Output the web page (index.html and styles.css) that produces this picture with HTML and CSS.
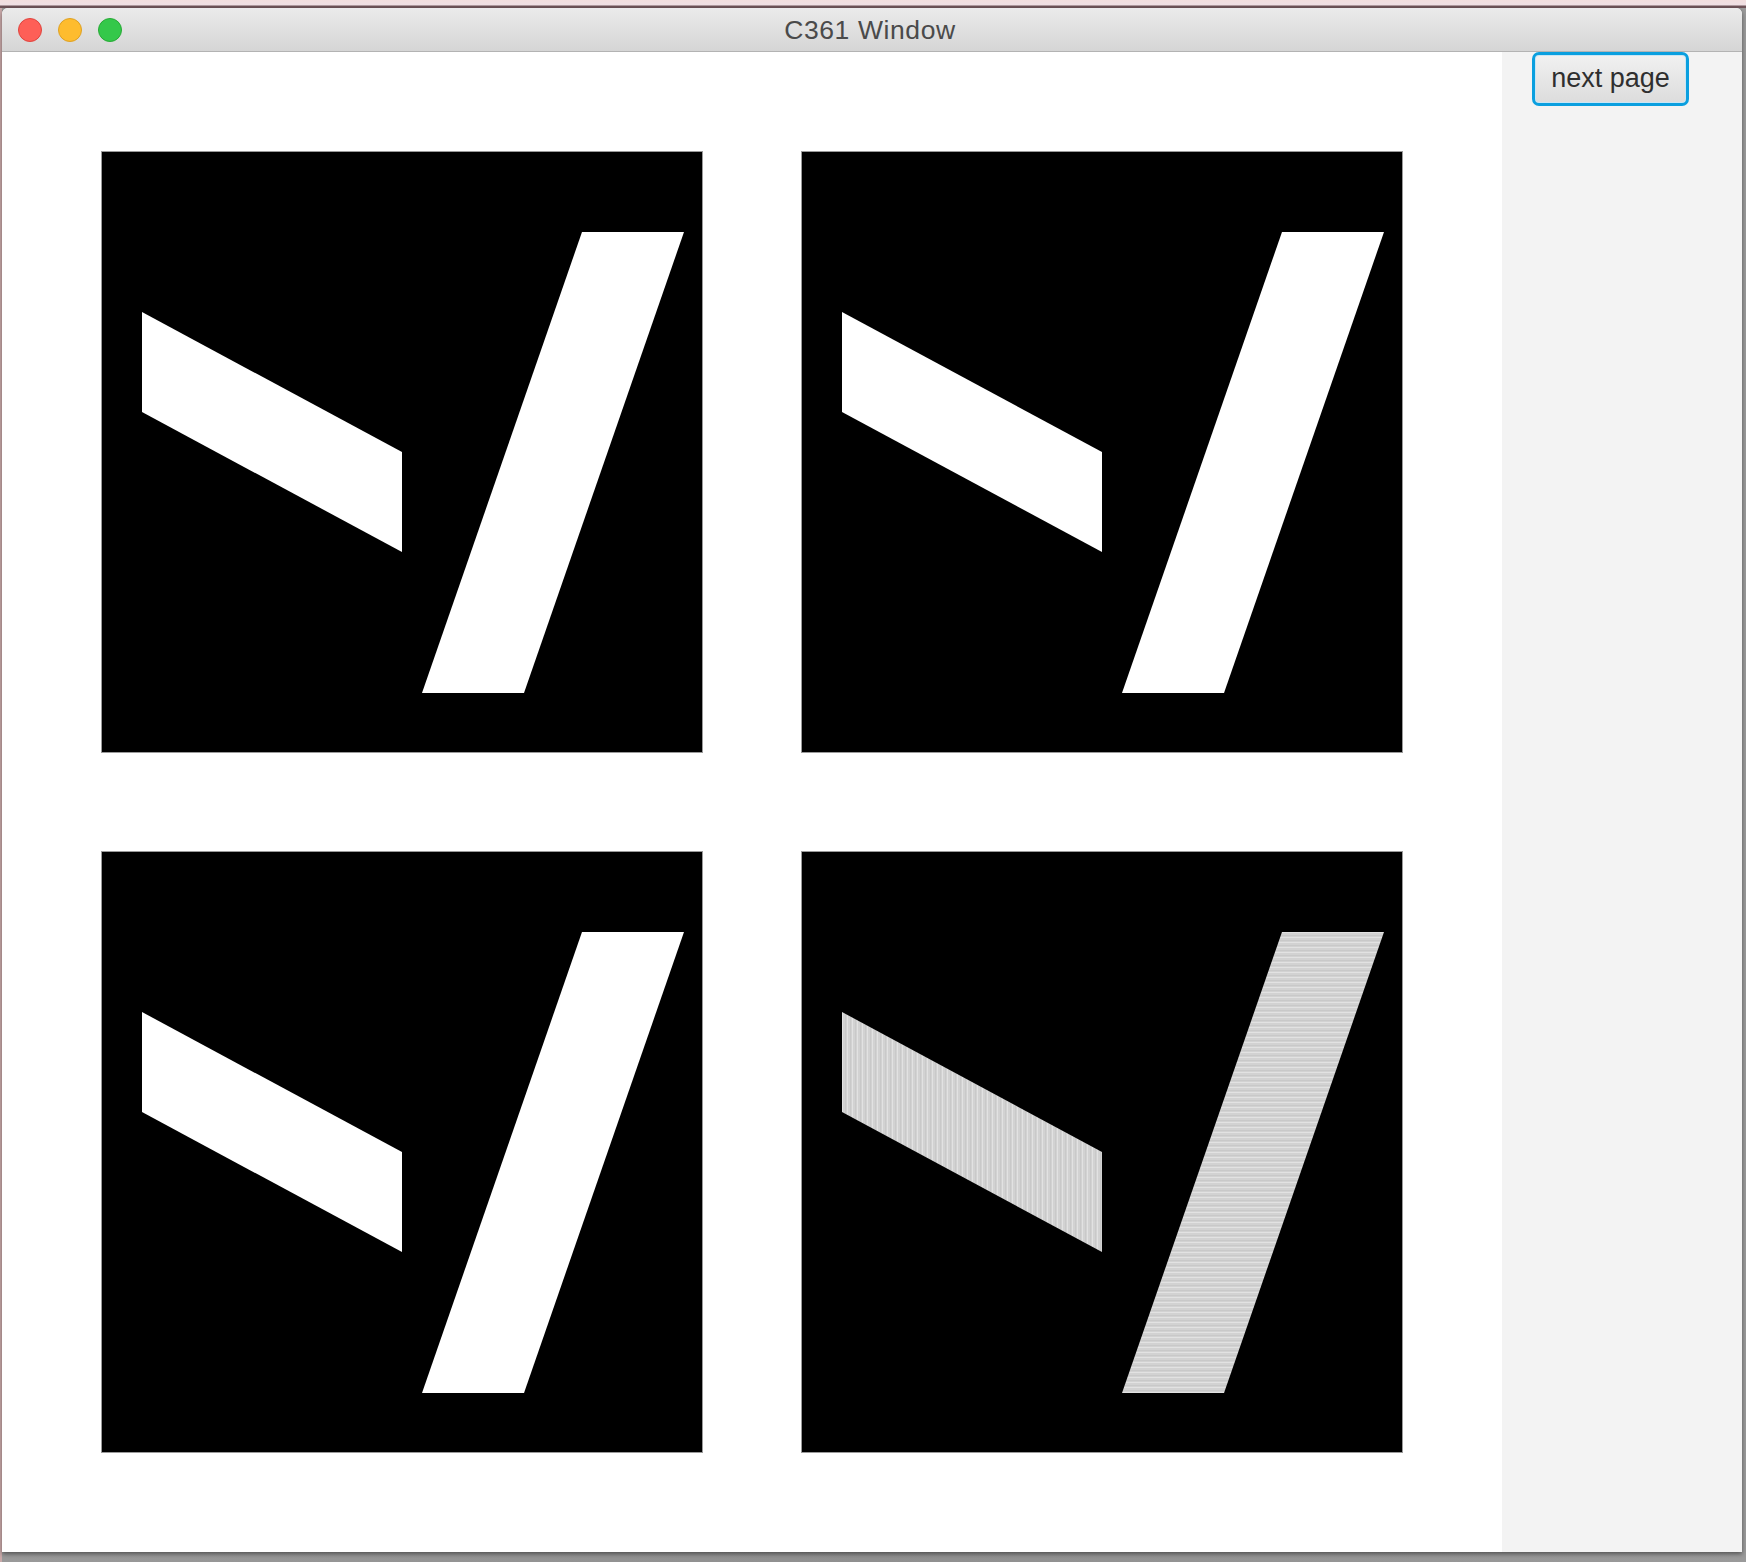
FILE: index.html
```html
<!DOCTYPE html>
<html>
<head>
<meta charset="utf-8">
<title>C361 Window</title>
<link rel="stylesheet" href="styles.css">
</head>
<body>
<svg class="defs" width="0" height="0" aria-hidden="true">
  <defs>
    <pattern id="vstripes" patternUnits="userSpaceOnUse" width="5" height="10">
      <rect width="5" height="10" fill="#d2d2d2"/>
      <rect x="0" width="1" height="10" fill="#e2e2e2"/>
      <rect x="3" width="1" height="10" fill="#c9c9c9"/>
    </pattern>
    <pattern id="hstripes" patternUnits="userSpaceOnUse" width="10" height="5">
      <rect width="10" height="5" fill="#d2d2d2"/>
      <rect y="0" width="10" height="1" fill="#e2e2e2"/>
      <rect y="3" width="10" height="1" fill="#c9c9c9"/>
    </pattern>
  </defs>
</svg>
<div class="window">
  <div class="titlebar">
    <div class="lights">
      <span class="light red"></span>
      <span class="light yellow"></span>
      <span class="light green"></span>
    </div>
    <div class="title">C361 Window</div>
  </div>
  <div class="content">
    <div class="canvas">
      <svg class="tile" viewBox="0 0 600 600">
        <rect width="600" height="600" fill="#000"/>
        <polygon points="40,160 300,300 300,400 40,260" fill="#fff"/>
        <polygon points="480,80 582,80 422,541 320,541" fill="#fff"/>
      </svg>
      <svg class="tile" viewBox="0 0 600 600">
        <rect width="600" height="600" fill="#000"/>
        <polygon points="40,160 300,300 300,400 40,260" fill="#fff"/>
        <polygon points="480,80 582,80 422,541 320,541" fill="#fff"/>
      </svg>
      <svg class="tile" viewBox="0 0 600 600">
        <rect width="600" height="600" fill="#000"/>
        <polygon points="40,160 300,300 300,400 40,260" fill="#fff"/>
        <polygon points="480,80 582,80 422,541 320,541" fill="#fff"/>
      </svg>
      <svg class="tile" viewBox="0 0 600 600">
        <rect width="600" height="600" fill="#000"/>
        <polygon points="40,160 300,300 300,400 40,260" fill="url(#vstripes)"/>
        <polygon points="480,80 582,80 422,541 320,541" fill="url(#hstripes)"/>
      </svg>
    </div>
    <div class="sidebar">
      <button class="next-btn">next page</button>
    </div>
  </div>
</div>
</body>
</html>
```

FILE: styles.css
```css
html, body {
  margin: 0;
  padding: 0;
}
body {
  width: 1746px;
  height: 1562px;
  overflow: hidden;
  padding: 8px 0 0 2px;
  box-sizing: border-box;
  background:
    linear-gradient(to bottom, #f2dede 0, #efe0e4 5px, #6e5358 6px, #6e5358 8px, transparent 8px),
    linear-gradient(to right, #c9a9a9 0, #c9a9a9 2px, #999 2px, #8f8f8f 50%, #9a9a9a 100%);
  font-family: "Liberation Sans", Arial, sans-serif;
}
.defs {
  position: absolute;
  width: 0;
  height: 0;
}
.window {
  width: 1740px;
  height: 1544px;
  background: #fff;
  border-radius: 6px 6px 0 0;
  box-shadow: 0 2px 4px rgba(0,0,0,0.45);
  display: flex;
  flex-direction: column;
  overflow: hidden;
}
.titlebar {
  height: 43px;
  flex: 0 0 43px;
  border-bottom: 1px solid #b3b3b3;
  background: linear-gradient(to bottom, #ebebeb, #d5d5d5);
  position: relative;
  display: flex;
  align-items: center;
  justify-content: center;
}
.lights {
  position: absolute;
  left: 16px;
  top: 10px;
  display: flex;
  gap: 16px;
}
.light {
  width: 24px;
  height: 24px;
  border-radius: 50%;
  box-sizing: border-box;
  display: block;
}
.red { background: #fe5f57; border: 1px solid #e0443e; }
.yellow { background: #febc2e; border: 1px solid #dea123; }
.green { background: #34c84a; border: 1px solid #27aa35; }
.title {
  font-size: 26.5px;
  color: #4a4a4a;
  letter-spacing: 0.6px;
  margin-left: -4px;
  padding-top: 2px;
}
.content {
  flex: 1;
  display: flex;
}
.canvas {
  width: 1500px;
  flex: 0 0 1500px;
  box-sizing: border-box;
  padding: 100px;
  display: grid;
  grid-template-columns: 600px 600px;
  grid-template-rows: 600px 600px;
  gap: 100px;
  background: #fff;
}
.tile {
  width: 600px;
  height: 600px;
  display: block;
  outline: 1px solid #9a9a9a;
}
.sidebar {
  flex: 1;
  background: #f3f3f3;
  padding: 0 0 0 30px;
}
.next-btn {
  width: 157px;
  height: 54px;
  box-sizing: border-box;
  border: 3px solid #0a9fdf;
  border-radius: 7px;
  background: linear-gradient(to bottom, #f1f1f1, #dcdcdc);
  box-shadow: inset 0 0 0 1px #c9e6f5;
  font-family: "Liberation Sans", Arial, sans-serif;
  font-size: 27px;
  color: #2f2f2f;
  padding: 0 0 2px 0;
  margin: 0;
}
```
